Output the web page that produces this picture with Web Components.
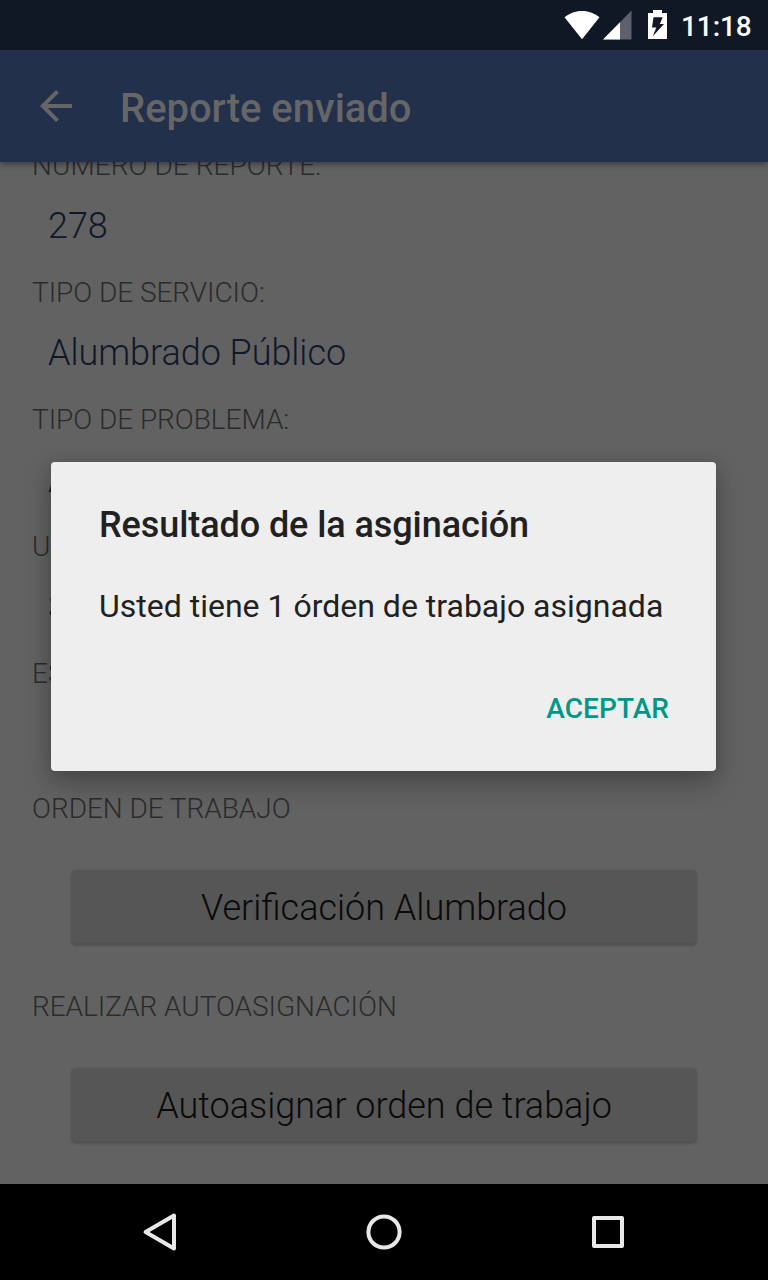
<!DOCTYPE html>
<html lang="es">
<head>
<meta charset="utf-8">
<title>Reporte enviado</title>
<style>
html, body { margin: 0; padding: 0; background: #000; }
body { font-family: Roboto, "Noto Sans", sans-serif; overflow: hidden; }
</style>
</head>
<body>
<report-screen></report-screen>
<script>
function define(name, html) {
  const template = document.createElement('template');
  template.innerHTML = html;
  customElements.define(name, class extends HTMLElement {
    constructor() {
      super();
      this.attachShadow({ mode: 'open' }).appendChild(template.content.cloneNode(true));
    }
  });
}

define('status-bar', `
<style>
:host { display: flex; height: 50px; box-sizing: border-box; background: #111825; color: #fff; justify-content: flex-end; align-items: flex-start; padding-right: 18px; }
svg { display: block; flex: none; }
span { font-size: 28px; font-weight: 500; line-height: 34px; margin-top: 10px; width: 69px; letter-spacing: -.1px; white-space: nowrap; }
</style>
<svg width="117" height="50" viewBox="564 0 117 50">
  <path fill="#fff" d="M582 39.2 564.5 17.3C569 13.500 575 11 582 11s13 2.500 17.500 6.300z"/>
  <path fill="#5c616b" d="M631.500 10.500V39.500H603z"/>
  <path fill="#fff" d="M620 22.200V39.500H603z"/>
  <path fill="#fff" fill-rule="evenodd" d="M653 10h9v3h5v26h-19V13h5zM653.500 17.300 652 27.500h4.300L652.800 36.300 664 24h-4.200l2.900-6.700z"/>
</svg>
<span>11:18</span>`);

define('app-bar', `
<style>
:host { display: flex; height: 112px; box-sizing: border-box; align-items: center; padding-left: 32px; background: #22304b; color: #666; box-shadow: 0 2px 6px rgba(0,0,0,.42); z-index: 1; }
svg { display: block; width: 48px; height: 48px; flex: none; }
h1 { margin: 5px 0 0 40px; font-size: 40px; line-height: 48px; font-weight: 500; letter-spacing: -.04px; }
</style>
<svg viewBox="0 0 24 24"><path fill="currentColor" d="M20 11H7.830l5.590-5.590L12 4l-8 8 8 8 1.410-1.410L7.830 13H20v-2z"/></svg>
<h1><slot></slot></h1>`);

define('section-label', `
<style>:host { display: block; height: 38px; font-size: 28px; line-height: 38px; font-weight: 300; letter-spacing: -.05px; color: #2b2b2b; white-space: nowrap; }</style>
<slot></slot>`);

define('report-field', `
<style>
:host { display: block; height: 127px; }
div { height: 48px; padding: 17px 0 0 16px; font-size: 36px; line-height: 48px; font-weight: 300; letter-spacing: -.04px; color: #10182a; white-space: nowrap; }
</style>
<section-label><slot name="label"></slot></section-label>
<div><slot></slot></div>`);

define('action-section', `
<style>
:host { display: block; height: 198px; }
button { display: block; width: 626px; height: 73px; margin: 42px 0 0 39px; padding: 2px 0 0; border: 0; border-radius: 5px; background: #565656; color: #0a0a0a; font: 300 36px/48px Roboto, sans-serif; box-shadow: 0 3px 2px #525252, 0 0 2px #5a5a5a; }
</style>
<section-label><slot name="label"></slot></section-label>
<button><slot></slot></button>`);

define('alert-dialog', `
<style>
:host { display: flex; flex-direction: column; box-sizing: border-box; width: 665px; height: 309px; padding: 39px 48px 0; border-radius: 4px; background: #eee; color: #212121; box-shadow: 0 12px 28px rgba(0,0,0,.26), 0 2px 16px rgba(0,0,0,.1); }
h2 { margin: 0; font-size: 36px; line-height: 48px; font-weight: 500; letter-spacing: -.08px; white-space: nowrap; }
p { margin: 37px 0 0; font-size: 32px; line-height: 40px; white-space: nowrap; }
button { align-self: flex-end; margin: 65px -1px 0 0; padding: 0; border: 0; background: none; color: #009688; font: 500 28px/36px Roboto, sans-serif; letter-spacing: .05px; }
</style>
<h2><slot name="title"></slot></h2>
<p><slot></slot></p>
<button><slot name="action"></slot></button>`);

define('navigation-bar', `
<style>
:host { display: flex; height: 96px; background: #000; justify-content: center; align-items: center; gap: 176px; }
svg { display: block; width: 48px; height: 48px; fill: none; stroke: #e8e8e8; stroke-width: 4; stroke-linejoin: round; }
</style>
<svg viewBox="136 1208 48 48"><path d="M174 1215.500V1248.500L145.600 1232z"/></svg>
<svg viewBox="360 1208 48 48"><circle cx="384" cy="1232" r="15.600"/></svg>
<svg viewBox="584 1208 48 48"><rect x="594" y="1218" width="28" height="28"/></svg>`);

define('report-screen', `
<style>
:host { display: flex; flex-direction: column; position: relative; width: 768px; height: 1280px; overflow: hidden; }
main { flex: 1; min-height: 0; overflow: hidden; background: #626262; }
.content { margin-top: -15px; padding-left: 32px; }
.first { letter-spacing: .05px; }
.last { height: 135px; }
app-bar { position: relative; }
alert-dialog { position: absolute; left: 51px; top: 462px; z-index: 2; }
</style>
<status-bar></status-bar>
<app-bar>Reporte enviado</app-bar>
<main><div class="content">
  <report-field><span class="first" slot="label">NÚMERO DE REPORTE:</span>278</report-field>
  <report-field><span slot="label">TIPO DE SERVICIO:</span>Alumbrado Público</report-field>
  <report-field><span slot="label">TIPO DE PROBLEMA:</span>A</report-field>
  <report-field><span slot="label">U</span>S</report-field>
  <report-field class="last"><span slot="label">ES</span></report-field>
  <action-section><span slot="label">ORDEN DE TRABAJO</span>Verificación Alumbrado</action-section>
  <action-section><span slot="label">REALIZAR AUTOASIGNACIÓN</span>Autoasignar orden de trabajo</action-section>
</div></main>
<navigation-bar></navigation-bar>
<alert-dialog><span slot="title">Resultado de la asginación</span>Usted tiene 1 órden de trabajo asignada<span slot="action">ACEPTAR</span></alert-dialog>`);
</script>
</body>
</html>
